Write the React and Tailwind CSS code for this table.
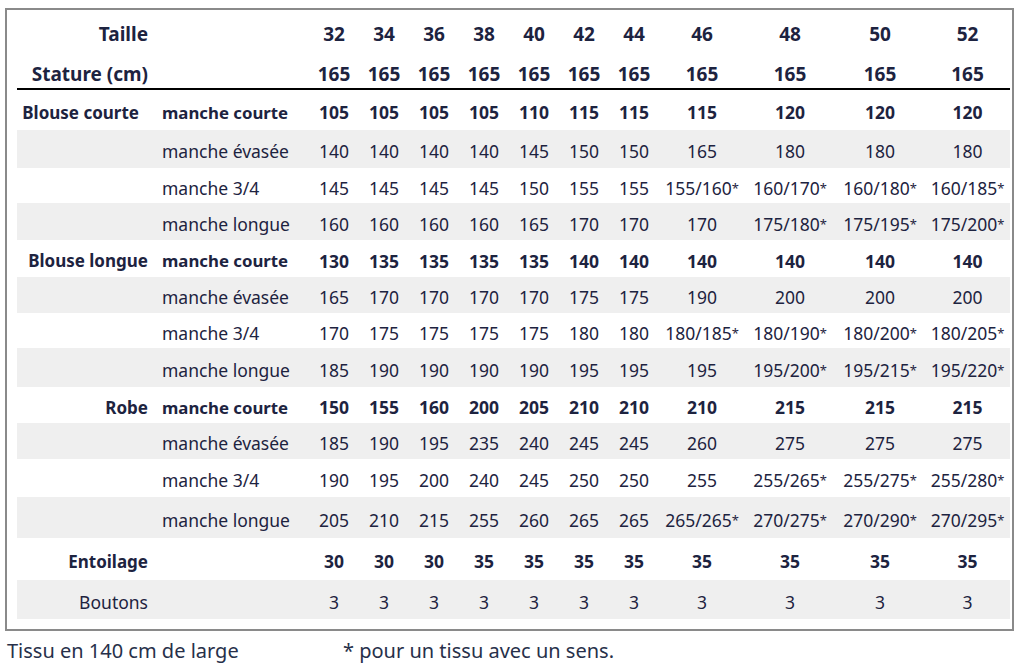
const sizes = ["32", "34", "36", "38", "40", "42", "44", "46", "48", "50", "52"];

const rows = [
  { label: "Blouse courte", sub: "manche courte", bold: true, h: "h-[40px]", pr: "pr-[16px]", vals: ["105", "105", "105", "105", "110", "115", "115", "115", "120", "120", "120"] },
  { sub: "manche évasée", h: "h-[38px]", vals: ["140", "140", "140", "140", "145", "150", "150", "165", "180", "180", "180"] },
  { sub: "manche 3/4", h: "h-[35px]", vals: ["145", "145", "145", "145", "150", "155", "155", "155/160*", "160/170*", "160/180*", "160/185*"] },
  { sub: "manche longue", h: "h-[37px]", vals: ["160", "160", "160", "160", "165", "170", "170", "170", "175/180*", "175/195*", "175/200*"] },
  { label: "Blouse longue", sub: "manche courte", bold: true, h: "h-[37px]", vals: ["130", "135", "135", "135", "135", "140", "140", "140", "140", "140", "140"] },
  { sub: "manche évasée", h: "h-[36px]", vals: ["165", "170", "170", "170", "170", "175", "175", "190", "200", "200", "200"] },
  { sub: "manche 3/4", h: "h-[35px]", vals: ["170", "175", "175", "175", "175", "180", "180", "180/185*", "180/190*", "180/200*", "180/205*"] },
  { sub: "manche longue", h: "h-[39px]", vals: ["185", "190", "190", "190", "190", "195", "195", "195", "195/200*", "195/215*", "195/220*"] },
  { label: "Robe", sub: "manche courte", bold: true, h: "h-[36px]", vals: ["150", "155", "160", "200", "205", "210", "210", "210", "215", "215", "215"] },
  { sub: "manche évasée", h: "h-[36px]", vals: ["185", "190", "195", "235", "240", "245", "245", "260", "275", "275", "275"] },
  { sub: "manche 3/4", h: "h-[38px]", vals: ["190", "195", "200", "240", "245", "250", "250", "255", "255/265*", "255/275*", "255/280*"] },
  { sub: "manche longue", h: "h-[41px]", vals: ["205", "210", "215", "255", "260", "265", "265", "265/265*", "270/275*", "270/290*", "270/295*"] },
  { label: "Entoilage", bold: true, h: "h-[42px]", vals: ["30", "30", "30", "35", "35", "35", "35", "35", "35", "35", "35"] },
  { label: "Boutons", h: "h-[39px]", vals: ["3", "3", "3", "3", "3", "3", "3", "3", "3", "3", "3"] },
];

const cols = "grid grid-cols-[138px_154px_repeat(7,50px)_86px_90px_90px_85px]";

// la petite étoile des tissus avec un sens
function Val({ v }) {
  if (!v.endsWith("*")) return v;
  return (
    <>
      {v.slice(0, -1)}
      <span className="text-[13px] align-[2px]">*</span>
    </>
  );
}

export default function App() {
  return (
    <div className="w-[1024px] h-[665px] bg-white text-[#1d2340] font-['Noto_Sans',sans-serif]">
      <div className="ml-[5px] mt-[8px] w-[1009px] border-2 border-[#8a8a8a] pl-[10px] pr-[2px] pb-[10px]">
        {/* en-tête */}
        <div className={`${cols} h-[48px] items-center text-[19px] font-bold`}>
          <div className="text-right pr-[7px]">Taille</div>
          <div />
          {sizes.map((s) => (
            <div key={s} className="text-center">{s}</div>
          ))}
        </div>
        <div className={`${cols} h-[30px] items-center pt-[2px] text-[19px] font-bold`}>
          <div className="text-right pr-[7px] whitespace-nowrap">Stature (cm)</div>
          <div />
          {sizes.map((s) => (
            <div key={s} className="text-center">165</div>
          ))}
        </div>
        <div className="h-[2px] bg-black" />

        {rows.map((r, i) => (
          <div
            key={i}
            className={`${cols} ${r.h} items-center pt-[5px] text-[17.5px] ${i % 2 === 1 ? "bg-[#efefef]" : "bg-white"}`}
          >
            <div className={`text-right whitespace-nowrap ${r.pr || "pr-[7px]"} ${r.label && r.label !== "Boutons" ? "font-bold text-[17px]" : ""}`}>
              {r.label || ""}
            </div>
            <div className={`pl-[7px] whitespace-nowrap ${r.bold && r.sub ? "font-bold text-[16.8px]" : ""}`}>{r.sub || ""}</div>
            {r.vals.map((v, j) => (
              <div key={j} className={`text-center whitespace-nowrap ${r.bold ? "font-bold" : ""}`}>
                <Val v={v} />
              </div>
            ))}
          </div>
        ))}
      </div>
      <div className="flex mt-[7px] pl-[7px] text-[20px] text-[#27304a] leading-[26px]">
        <div className="w-[336px]">Tissu en 140 cm de large</div>
        <div>* pour un tissu avec un sens.</div>
      </div>
    </div>
  );
}
